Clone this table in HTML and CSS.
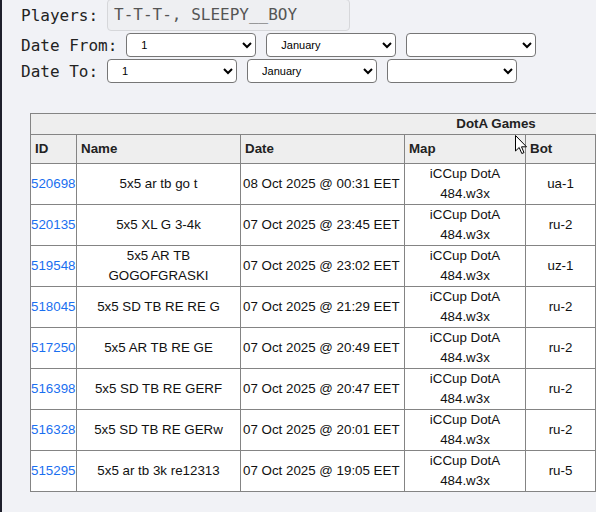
FILE: index.html
```html
<!DOCTYPE html>
<html>
<head>
<meta charset="utf-8">
<link rel="stylesheet" href="styles.css">
</head>
<body>
<div class="page">
  <div class="filters">
    <div class="row row-players">
      <span class="label">Players:</span>
      <div class="players-box">T-T-T-, SLEEPY__BOY</div>
    </div>
    <div class="row">
      <span class="label">Date From:</span>
      <select class="sel"><option>1</option></select>
      <select class="sel"><option>January</option></select>
      <select class="sel"><option></option></select>
    </div>
    <div class="row">
      <span class="label">Date To:</span>
      <select class="sel"><option>1</option></select>
      <select class="sel"><option>January</option></select>
      <select class="sel"><option></option></select>
    </div>
  </div>

  <div class="table-wrap">
    <table class="games">
      <colgroup>
        <col class="c-id"><col class="c-name"><col class="c-date"><col class="c-map"><col class="c-bot"><col class="c-x1"><col class="c-x2">
      </colgroup>
      <thead>
        <tr class="title-row"><th colspan="7">DotA Games</th></tr>
        <tr class="head-row"><th>ID</th><th>Name</th><th>Date</th><th>Map</th><th>Bot</th><th></th><th></th></tr>
      </thead>
      <tbody>
        <tr><td class="id"><a href="#">520698</a></td><td class="ctr">5x5 ar tb go t</td><td>08 Oct 2025 @ 00:31 EET</td><td class="ctr">iCCup DotA 484.w3x</td><td class="ctr">ua-1</td><td></td><td></td></tr>
        <tr><td class="id"><a href="#">520135</a></td><td class="ctr">5x5 XL G 3-4k</td><td>07 Oct 2025 @ 23:45 EET</td><td class="ctr">iCCup DotA 484.w3x</td><td class="ctr">ru-2</td><td></td><td></td></tr>
        <tr><td class="id"><a href="#">519548</a></td><td class="ctr">5x5 AR TB GOGOFGRASKI</td><td>07 Oct 2025 @ 23:02 EET</td><td class="ctr">iCCup DotA 484.w3x</td><td class="ctr">uz-1</td><td></td><td></td></tr>
        <tr><td class="id"><a href="#">518045</a></td><td class="ctr">5x5 SD TB RE RE G</td><td>07 Oct 2025 @ 21:29 EET</td><td class="ctr">iCCup DotA 484.w3x</td><td class="ctr">ru-2</td><td></td><td></td></tr>
        <tr><td class="id"><a href="#">517250</a></td><td class="ctr">5x5 AR TB RE GE</td><td>07 Oct 2025 @ 20:49 EET</td><td class="ctr">iCCup DotA 484.w3x</td><td class="ctr">ru-2</td><td></td><td></td></tr>
        <tr><td class="id"><a href="#">516398</a></td><td class="ctr">5x5 SD TB RE GERF</td><td>07 Oct 2025 @ 20:47 EET</td><td class="ctr">iCCup DotA 484.w3x</td><td class="ctr">ru-2</td><td></td><td></td></tr>
        <tr><td class="id"><a href="#">516328</a></td><td class="ctr">5x5 SD TB RE GERw</td><td>07 Oct 2025 @ 20:01 EET</td><td class="ctr">iCCup DotA 484.w3x</td><td class="ctr">ru-2</td><td></td><td></td></tr>
        <tr><td class="id"><a href="#">515295</a></td><td class="ctr">5x5 ar tb 3k re12313</td><td>07 Oct 2025 @ 19:05 EET</td><td class="ctr">iCCup DotA 484.w3x</td><td class="ctr">ru-5</td><td></td><td></td></tr>
      </tbody>
    </table>
    <svg class="cursor" width="13" height="20" viewBox="0 0 13 20">
      <path d="M0.5 0.5 L0.5 16 L4.2 12.5 L6.8 18.5 L9 17.6 L6.5 11.8 L11.5 11.8 Z" fill="#fff" stroke="#000" stroke-width="1" stroke-linejoin="round"/>
    </svg>
  </div>
</div>
</body>
</html>
```

FILE: styles.css
```css
html, body {
  margin: 0;
  padding: 0;
  overflow: hidden;
}

body {
  background: #f1f2f6;
  width: 596px;
  height: 512px;
}

.page {
  border-left: 2px solid #1e1f2b;
  height: 512px;
  box-sizing: border-box;
  padding-left: 19px;
}

.filters {
  display: flex;
  flex-direction: column;
  gap: 2px;
}

.row {
  display: flex;
  align-items: center;
  font-family: "DejaVu Sans Mono", "Liberation Mono", monospace;
  font-size: 16px;
  color: #222;
  height: 24px;
}

.row-players {
  height: 31px;
}

.label {
  margin-right: 9px;
  white-space: pre;
}

.players-box {
  box-sizing: border-box;
  width: 243px;
  height: 32px;
  margin-top: -2px;
  border: 1px solid #d6d7da;
  border-radius: 4px;
  background: #eeeff2;
  color: #555;
  padding: 4px 6px 0;
  line-height: 22px;
}

.sel {
  box-sizing: border-box;
  width: 130px;
  height: 24px;
  margin: 0 10px 0 0;
  font-family: "Liberation Sans", Arial, sans-serif;
  font-size: 11px;
  color: #000;
  background: #fff;
  border: 1px solid #767676;
  border-radius: 4px;
  padding: 0 4px 0 10px;
}

.table-wrap {
  position: relative;
  margin-top: 30px;
  margin-left: 9px;
}

.games {
  border-collapse: collapse;
  table-layout: fixed;
  width: 931px;
  font-family: "Liberation Sans", Arial, sans-serif;
  font-size: 13.333px;
  color: #111;
  background: #fff;
}

.c-id { width: 46px; }
.c-name { width: 164px; }
.c-date { width: 164px; }
.c-map { width: 121px; }
.c-bot { width: 70px; }
.c-x1 { width: 120px; }
.c-x2 { width: 246px; }

.games th,
.games td {
  border: 1px solid #848484;
  line-height: 20px;
}

.games th {
  background: #eeeeee;
  font-weight: bold;
  text-align: left;
  color: #222;
}

.title-row th {
  text-align: center;
  padding: 0;
  height: 20px;
}

.head-row th {
  padding: 4px 4px;
  height: 20px;
}

.games td {
  padding: 0 2px;
  height: 40px;
  vertical-align: middle;
}

.games td.id {
  padding: 0;
  white-space: nowrap;
  overflow: visible;
}

.games td.ctr {
  text-align: center;
}

.games a {
  color: #1a6ff0;
  text-decoration: none;
}

.cursor {
  position: absolute;
  left: 485px;
  top: 22px;
}
```
